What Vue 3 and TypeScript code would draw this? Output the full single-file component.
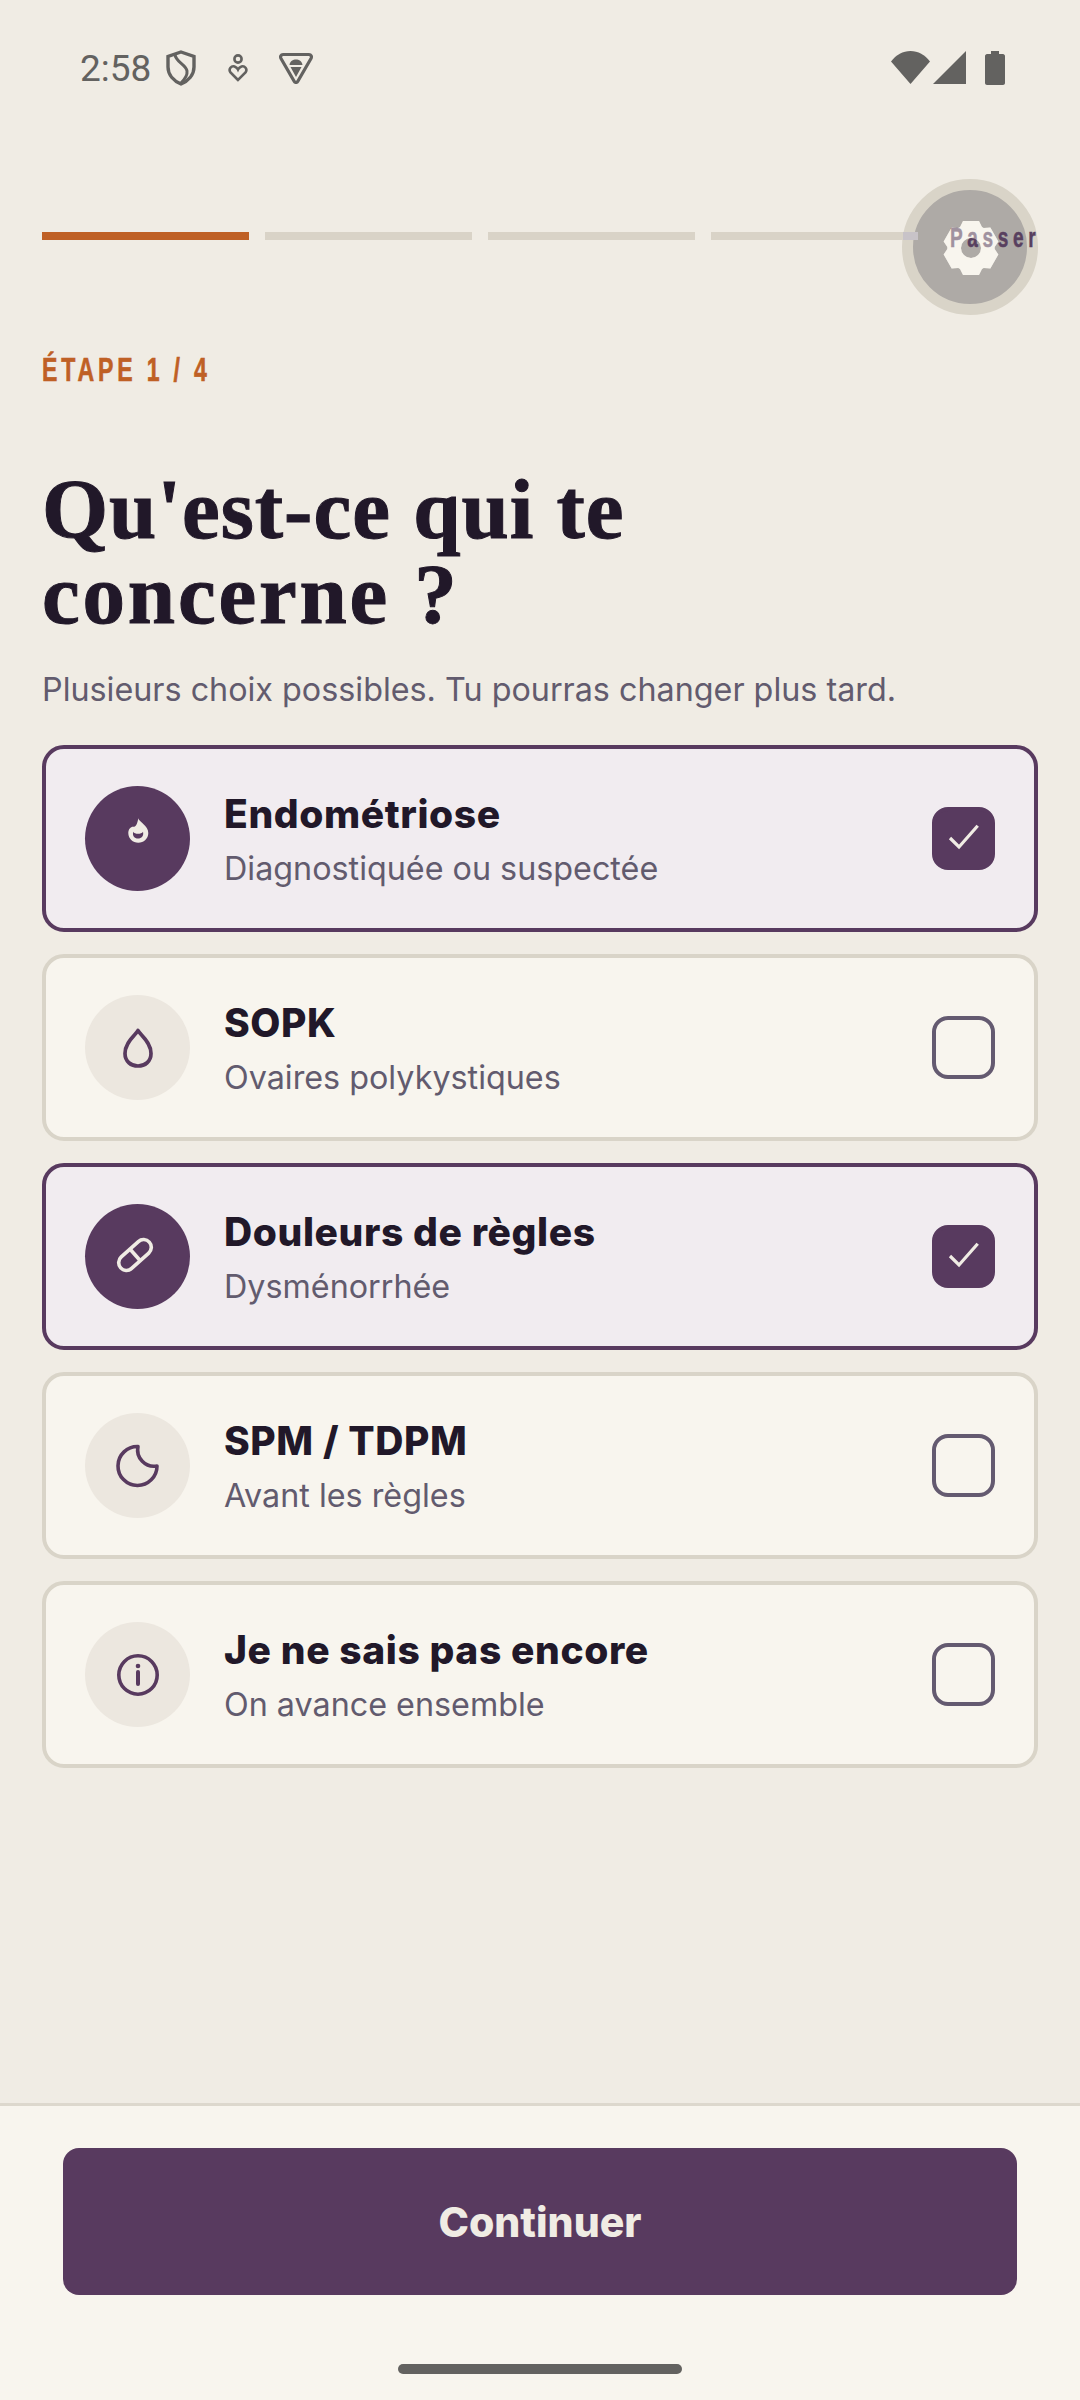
<script setup lang="ts">
import { ref } from 'vue'

interface Option {
  key: string
  title: string
  sub: string
  selected: boolean
}

const options = ref<Option[]>([
  { key: 'flame', title: 'Endométriose', sub: 'Diagnostiquée ou suspectée', selected: true },
  { key: 'drop', title: 'SOPK', sub: 'Ovaires polykystiques', selected: false },
  { key: 'pill', title: 'Douleurs de règles', sub: 'Dysménorrhée', selected: true },
  { key: 'moon', title: 'SPM / TDPM', sub: 'Avant les règles', selected: false },
  { key: 'info', title: 'Je ne sais pas encore', sub: 'On avance ensemble', selected: false }
])

const segments = [true, false, false, false]

// six teeth around a centre hole, in a 56x56 box
function gearPath(): string {
  const c = 28
  const pts: string[] = []
  for (let i = 0; i < 6; i++) {
    const a = ((-90 + 60 * i) * Math.PI) / 180
    const ux = Math.cos(a)
    const uy = Math.sin(a)
    const at = (r: number, w: number) =>
      `${(c + ux * r - uy * w).toFixed(2)} ${(c + uy * r + ux * w).toFixed(2)}`
    pts.push(at(21, -11), at(27, -8), at(27, 8), at(21, 11))
  }
  return `M${pts.join(' L')} Z M${c} ${c - 10} A10 10 0 1 0 ${c} ${c + 10} A10 10 0 1 0 ${c} ${c - 10} Z`
}
const gear = gearPath()
</script>

<template>
  <div class="screen">
    <div class="status">
      <div class="status-left">
        <span class="time">2:58</span>
        <svg class="st-shield" viewBox="0 0 30 36" fill="none" stroke="#636260" stroke-width="3.4">
          <path d="M15 2 L28 6.5 V17 C28 25 22 31 15 34 C8 31 2 25 2 17 V6.5 Z" />
          <path d="M9 4 C9 12 20 14 21 21 C21.6 25 19 29 15 33" stroke-width="3" />
        </svg>
        <svg class="st-heart" viewBox="0 0 20 28" fill="none" stroke="#636260" stroke-width="2.6">
          <circle cx="10" cy="5" r="3.6" />
          <path d="M10 26 L2.5 18.5 C0 15 3.5 11.5 6.5 12.5 C8 13 9.5 14.5 10 15.5 C10.5 14.5 12 13 13.5 12.5 C16.5 11.5 20 15 17.5 18.5 Z" />
        </svg>
        <svg class="st-tri" viewBox="0 0 34 32" fill="none">
          <path d="M4 2.5 H30 C32 2.5 33 4.5 32 6.5 L19 29 C18 31 16 31 15 29 L2 6.5 C1 4.5 2 2.5 4 2.5 Z" stroke="#636260" stroke-width="3.2" />
          <path d="M10.5 13 C11 9 14 7.5 17 7.5 C20 7.5 23 9 23.5 13 Z M11.5 15 H22.5 L17 25 Z" fill="#636260" />
        </svg>
      </div>
      <div class="status-right">
        <svg class="st-wifi" viewBox="0 0 39 33"><path d="M0 10.5 C5 4 12 0 19.5 0 C27 0 34 4 39 10.5 L19.5 33 Z" fill="#636260" /></svg>
        <svg class="st-signal" viewBox="0 0 33 33"><path d="M33 0 V33 H0 Z" fill="#636260" /></svg>
        <svg class="st-batt" viewBox="0 0 20 34"><path d="M6 0 H14 V3 H18 C19 3 20 4 20 5 V32 C20 33 19 34 18 34 H2 C1 34 0 33 0 32 V5 C0 4 1 3 2 3 H6 Z" fill="#636260" /></svg>
      </div>
    </div>

    <main class="content">
      <div class="progress">
        <div class="bars">
          <span v-for="(on, i) in segments" :key="i" class="bar" :class="{ on }"></span>
        </div>
        <span class="skip"><span class="narrow">Passer</span></span>
      </div>

      <div class="step"><span class="narrow">ÉTAPE 1 / 4</span></div>
      <h1 class="title">Qu'est-ce qui te<br /><span class="wide">concerne ?</span></h1>
      <p class="lead">Plusieurs choix possibles. Tu pourras changer plus tard.</p>

      <div class="list">
        <div v-for="o in options" :key="o.key" class="card" :class="{ selected: o.selected }">
          <div class="round">
            <svg v-if="o.key === 'flame'" class="ico" viewBox="0 0 44 44">
              <path d="M22.3 1.3 C23 5 32.3 8.5 32.3 16 C32.3 21.7 27.7 25.7 22.3 25.7 C16.9 25.7 12.3 21.7 12.3 16 C12.3 11.5 15.5 9 18 9.8 C20 10 21.5 6 22.3 1.3 Z" fill="currentColor" />
              <path d="M17.2 14.7 C18.5 17.5 25.5 17.5 27 14.7 C28 19 25.5 21.5 22 21.5 C18.5 21.5 16.2 19 17.2 14.7 Z" fill="#583a5f" />
            </svg>
            <svg v-else-if="o.key === 'drop'" class="ico" viewBox="0 0 44 44" fill="none" stroke="currentColor" stroke-width="3.7" stroke-linejoin="round">
              <path d="M22 4.5 C24 9 35 15.5 35 27.5 C35 35.5 29 40 22 40 C15 40 9 35.5 9 27.5 C9 15.5 20 9 22 4.5 Z" />
            </svg>
            <svg v-else-if="o.key === 'pill'" class="ico" viewBox="0 0 44 44" fill="none" stroke="currentColor" stroke-width="3.6">
              <rect x="-0.25" y="12.25" width="38.5" height="15.5" rx="7.75" transform="rotate(-42 19 20)" />
              <path d="M13.5 13.5 L24.5 26" />
            </svg>
            <svg v-else-if="o.key === 'moon'" class="ico" viewBox="0 0 44 44" fill="none" stroke="currentColor" stroke-width="3.6" stroke-linejoin="round">
              <path d="M22 2.5 A19.5 19.5 0 1 0 41 22 A16.4 16.4 0 0 1 22 2.5 Z" />
            </svg>
            <svg v-else class="ico" viewBox="0 0 44 44" fill="none" stroke="currentColor" stroke-width="3.6">
              <circle cx="22" cy="22" r="19.2" />
              <path d="M22 19 V31" stroke-width="4" stroke-linecap="round" />
              <circle cx="22" cy="13" r="2.3" fill="currentColor" stroke="none" />
            </svg>
          </div>
          <div class="text">
            <div class="name">{{ o.title }}</div>
            <div class="sub">{{ o.sub }}</div>
          </div>
          <div class="check">
            <svg v-if="o.selected" viewBox="0 0 63 63" fill="none" stroke="#f0ece4" stroke-width="3.2">
              <path d="M18 31 L27 40 L45.7 18.7" />
            </svg>
          </div>
        </div>
      </div>
    </main>

    <footer class="footer">
      <button class="cta" type="button">Continuer</button>
      <div class="home"></div>
    </footer>

    <!-- floating debug button: the row's text shows through it, the top gear veils the text -->
    <div class="fab"><span class="fab-bar"></span></div>
    <svg class="gear" viewBox="0 0 56 56"><path fill-rule="evenodd" :d="gear" fill="#f8f5ee" /></svg>
    <svg class="gear gear-top" viewBox="0 0 56 56"><path fill-rule="evenodd" :d="gear" fill="#f8f5ee" /></svg>
  </div>
</template>

<style>
html,
body {
  margin: 0;
  background: #f0ece4;
}
</style>

<style scoped>
.screen {
  position: relative;
  width: 1080px;
  height: 2400px;
  display: flex;
  flex-direction: column;
  background: #f0ece4;
  color: #211829;
  font-family: Inter, 'Liberation Sans', sans-serif;
  overflow: hidden;
}

.status {
  height: 136px;
  padding: 50px 75px 0 80px;
  box-sizing: border-box;
  display: flex;
  justify-content: space-between;
  align-items: flex-start;
  flex-shrink: 0;
}
.status-left {
  display: flex;
  align-items: center;
  height: 36px;
}
.time {
  font-family: Roboto, sans-serif;
  font-size: 37px;
  color: #636260;
  line-height: 36px;
  width: 86px;
  position: relative;
  top: 1px;
}
.st-shield {
  width: 30px;
  height: 36px;
}
.st-heart {
  width: 20px;
  height: 28px;
  margin-left: 32px;
}
.st-tri {
  width: 34px;
  height: 32px;
  margin-left: 31px;
}
.status-right {
  display: flex;
  align-items: flex-start;
  padding-top: 1px;
}
.st-wifi {
  width: 39px;
  height: 33px;
}
.st-signal {
  width: 33px;
  height: 33px;
  margin-left: 3px;
}
.st-batt {
  width: 20px;
  height: 34px;
  margin-left: 19px;
}

.content {
  flex: 1;
  padding: 0 42px;
}
.progress {
  display: flex;
  align-items: center;
  height: 32px;
  margin-top: 84px;
  gap: 32px;
}
.bars {
  flex: 1;
  display: flex;
  gap: 16px;
}
.bar {
  flex: 1;
  height: 8px;
  background: #d9d3c7;
}
.bar.on {
  background: #bf6025;
}
.narrow {
  display: inline-block;
  transform: scaleX(0.68);
  transform-origin: left center;
  white-space: nowrap;
  font-family: 'Liberation Sans', sans-serif;
  font-weight: 700;
}
.skip {
  position: relative;
  top: 1px;
  z-index: 2;
  width: 88px;
  font-size: 28px;
  line-height: 32px;
  letter-spacing: 6.8px;
  color: #58405f;
  -webkit-text-stroke: 0.5px #58405f;
}
.step {
  margin-top: 97px;
  font-size: 34px;
  letter-spacing: 5.6px;
  line-height: 40px;
  color: #bf6025;
  -webkit-text-stroke: 0.6px #bf6025;
}
.title {
  margin: 78px 0 0;
  font-family: 'Liberation Serif', serif;
  font-weight: 700;
  font-size: 85px;
  line-height: 85px;
  letter-spacing: 1px;
  -webkit-text-stroke: 1px #211829;
  color: #211829;
}
.wide {
  letter-spacing: 2.8px;
}
.lead {
  margin: 31px 0 0;
  font-size: 32.3px;
  line-height: 44px;
  color: #625b6e;
}
.list {
  margin-top: 33px;
  display: flex;
  flex-direction: column;
  gap: 22px;
}
.card {
  height: 187px;
  box-sizing: border-box;
  border: 4px solid #d9d4c8;
  border-radius: 22px;
  background: #f8f5ee;
  padding: 0 39px;
  display: flex;
  align-items: center;
  gap: 34px;
}
.card.selected {
  border-color: #583a5f;
  background: #f1ecf0;
}
.round {
  width: 105px;
  height: 105px;
  border-radius: 50%;
  background: #ece7df;
  color: #583a5f;
  display: flex;
  align-items: center;
  justify-content: center;
  flex-shrink: 0;
}
.selected .round {
  background: #583a5f;
  color: #f0ece4;
}
.ico {
  width: 44px;
  height: 44px;
}
.text {
  flex: 1;
  min-width: 0;
  padding-top: 3px;
}
.name {
  font-weight: 800;
  font-size: 39px;
  letter-spacing: 0.6px;
  line-height: 50px;
  color: #211829;
}
.sub {
  margin-top: 8px;
  font-size: 32.3px;
  line-height: 44px;
  color: #625b6e;
}
.check {
  width: 63px;
  height: 63px;
  box-sizing: border-box;
  border: 4px solid #645a70;
  border-radius: 16px;
  flex-shrink: 0;
}
.check svg {
  display: block;
  width: 63px;
  height: 63px;
  margin: -4px;
}
.selected .check {
  background: #583a5f;
  border-color: #583a5f;
}

.footer {
  height: 297px;
  box-sizing: border-box;
  border-top: 3px solid #ddd8cd;
  background: #f8f5ee;
  padding: 42px 63px 0;
  flex-shrink: 0;
}
.cta {
  display: block;
  width: 100%;
  height: 147px;
  border: 0;
  border-radius: 16px;
  background: #583a5f;
  color: #f0ece4;
  font-family: Inter, sans-serif;
  font-weight: 800;
  font-size: 41px;
}
.home {
  width: 284px;
  height: 10px;
  margin: 69px auto 0;
  border-radius: 5px;
  background: #636260;
}

.fab {
  position: absolute;
  z-index: 1;
  left: 902px;
  top: 179px;
  width: 136px;
  height: 136px;
  box-sizing: border-box;
  border: 11px solid #d9d4c8;
  border-radius: 50%;
  background: #aeaaa6;
}
.fab-bar {
  position: absolute;
  left: -10px;
  top: 42px;
  width: 15px;
  height: 8px;
  background: #c8c3c8;
}
.gear {
  position: absolute;
  z-index: 1;
  left: 943px;
  top: 220px;
  width: 56px;
  height: 56px;
}
.gear-top {
  z-index: 3;
  opacity: 0.45;
}
</style>
